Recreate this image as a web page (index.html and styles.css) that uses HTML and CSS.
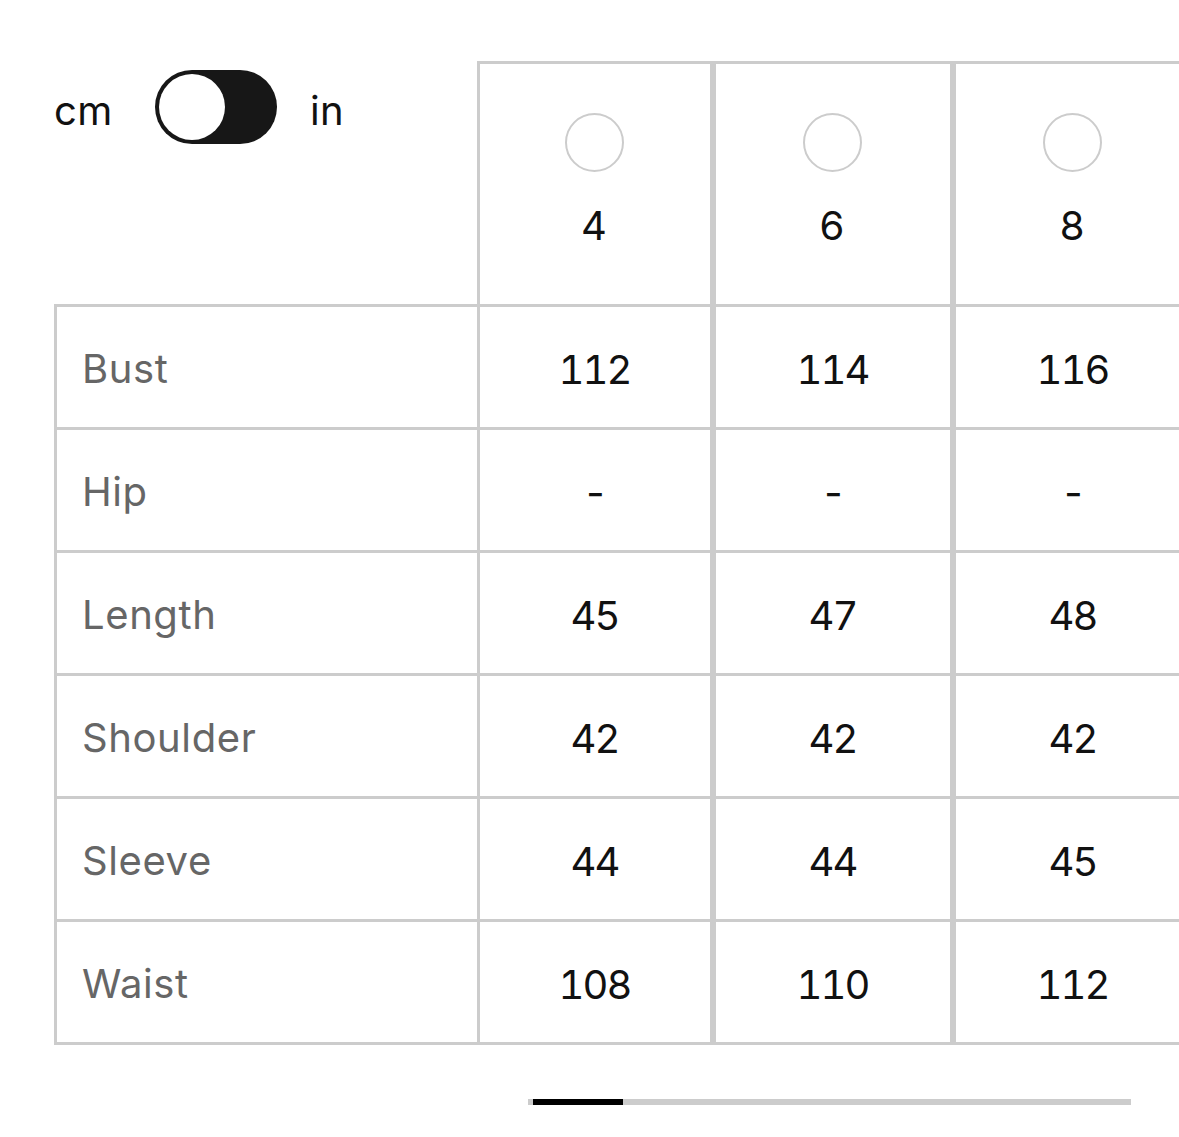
FILE: index.html
```html
<!DOCTYPE html>
<html lang="en">
<head>
<meta charset="utf-8">
<title>Size chart</title>
<link rel="stylesheet" href="styles.css">
</head>
<body>
<div class="chart">
  <div class="labels">
    <div class="unit-toggle">
      <span class="unit">cm</span>
      <span class="switch"><span class="knob"></span></span>
      <span class="unit unit-in">in</span>
    </div>
    <div class="label-table">
      <div class="label-cell">Bust</div>
      <div class="label-cell">Hip</div>
      <div class="label-cell">Length</div>
      <div class="label-cell">Shoulder</div>
      <div class="label-cell">Sleeve</div>
      <div class="label-cell">Waist</div>
    </div>
  </div>
  <div class="size-col size-col-first">
    <div class="size-head"><span class="radio"></span><span class="size-num">4</span></div>
    <div class="size-cell">112</div>
    <div class="size-cell">-</div>
    <div class="size-cell">45</div>
    <div class="size-cell">42</div>
    <div class="size-cell">44</div>
    <div class="size-cell">108</div>
  </div>
  <div class="size-col">
    <div class="size-head"><span class="radio"></span><span class="size-num">6</span></div>
    <div class="size-cell">114</div>
    <div class="size-cell">-</div>
    <div class="size-cell">47</div>
    <div class="size-cell">42</div>
    <div class="size-cell">44</div>
    <div class="size-cell">110</div>
  </div>
  <div class="size-col">
    <div class="size-head"><span class="radio"></span><span class="size-num">8</span></div>
    <div class="size-cell">116</div>
    <div class="size-cell">-</div>
    <div class="size-cell">48</div>
    <div class="size-cell">42</div>
    <div class="size-cell">45</div>
    <div class="size-cell">112</div>
  </div>
</div>
<div class="scrollbar"><div class="thumb"></div></div>
</body>
</html>
```
FILE: styles.css
```css
html, body {
  margin: 0;
  padding: 0;
  background: #fff;
}
body {
  font-family: Inter, "Liberation Sans", Arial, sans-serif;
  font-size: 40px;
  color: #111;
  overflow: hidden;
  width: 1179px;
  height: 1137px;
}
.chart {
  display: flex;
  margin: 61px 0 0 54px;
  width: 1125px;
  overflow: hidden;
}
.labels {
  width: 423px;
  flex-shrink: 0;
}
.unit-toggle {
  height: 243px;
  box-sizing: border-box;
  padding-top: 9px;
  display: flex;
  align-items: flex-start;
}
.unit {
  height: 74px;
  box-sizing: border-box;
  padding-top: 6px;
  display: flex;
  align-items: center;
  color: #111;
  letter-spacing: 0.5px;
}
.switch {
  position: relative;
  width: 122px;
  height: 74px;
  border-radius: 37px;
  background: #171717;
  margin-left: 42px;
  flex-shrink: 0;
}
.knob {
  position: absolute;
  left: 4px;
  top: 4px;
  width: 66px;
  height: 66px;
  border-radius: 50%;
  background: #fff;
}
.unit-in {
  margin-left: 33px;
}
.label-table {
  border-left: 3px solid #cccccc;
  border-top: 3px solid #cccccc;
  border-bottom: 3px solid #cccccc;
}
.label-cell {
  height: 120px;
  display: flex;
  align-items: center;
  padding-left: 25px;
  padding-top: 2px;
  box-sizing: border-box;
  color: #666;
  letter-spacing: 0.6px;
}
.label-cell + .label-cell {
  border-top: 3px solid #cccccc;
  height: 123px;
}
.size-col {
  width: 240px;
  flex-shrink: 0;
  box-sizing: border-box;
  border: 3px solid #cccccc;
}
.size-col-first {
  width: 236px;
}
.size-head {
  height: 243px;
  border-bottom: 3px solid #cccccc;
  display: flex;
  flex-direction: column;
  align-items: center;
  padding: 49px 2px 0 0;
  box-sizing: border-box;
}
.radio {
  width: 59px;
  height: 59px;
  box-sizing: border-box;
  border-radius: 50%;
  border: 2.5px solid #cccccc;
}
.size-num {
  margin-top: 30px;
  line-height: 48px;
}
.size-cell {
  height: 120px;
  box-sizing: border-box;
  padding: 4px 1px 0 0;
  display: flex;
  align-items: center;
  justify-content: center;
  font-variant-numeric: tabular-nums;
  letter-spacing: -2px;
}
.size-cell + .size-cell {
  border-top: 3px solid #cccccc;
  height: 123px;
}
.scrollbar {
  margin: 54px 0 0 528px;
  width: 603px;
  height: 6px;
  background: #cccccc;
}
.thumb {
  margin-left: 5px;
  width: 90px;
  height: 6px;
  background: #000;
}
```
